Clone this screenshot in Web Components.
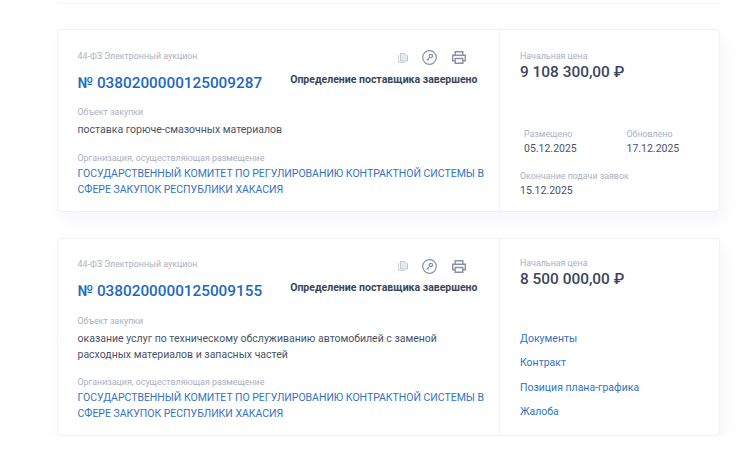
<!DOCTYPE html>
<html lang="ru">
<head>
<meta charset="utf-8">
<title>Закупки</title>
<style>
  html, body { margin: 0; background: #fff; }
  body { font-family: Roboto, "Noto Sans", sans-serif; color: #334059; }
</style>
</head>
<body>
<tender-list>
  <tender-card law="44-ФЗ Электронный аукцион" number="№ 0380200000125009287" status="Определение поставщика завершено"
    price="9 108 300,00 ₽" org="ГОСУДАРСТВЕННЫЙ КОМИТЕТ ПО РЕГУЛИРОВАНИЮ КОНТРАКТНОЙ СИСТЕМЫ В СФЕРЕ ЗАКУПОК РЕСПУБЛИКИ ХАКАСИЯ">
    <span slot="subject">поставка горюче-смазочных материалов</span>
    <tender-dates slot="side"></tender-dates>
  </tender-card>
  <tender-card law="44-ФЗ Электронный аукцион" number="№ 0380200000125009155" status="Определение поставщика завершено"
    price="8 500 000,00 ₽" org="ГОСУДАРСТВЕННЫЙ КОМИТЕТ ПО РЕГУЛИРОВАНИЮ КОНТРАКТНОЙ СИСТЕМЫ В СФЕРЕ ЗАКУПОК РЕСПУБЛИКИ ХАКАСИЯ" style="--side-top:18.5px;--side-gap:42px;--obj-gap:13px;--org-gap:13px">
    <span slot="subject">оказание услуг по техническому обслуживанию автомобилей с заменой расходных материалов и запасных частей</span>
    <tender-links slot="side"></tender-links>
  </tender-card>
</tender-list>

<template id="tender-card-tpl">
  <style>
    :host {
      display: grid;
      grid-template-columns: 442px 1fr;
      background: #fff;
      border: 1px solid #f0f1f6;
      border-radius: 4px;
      box-shadow: 4px 8px 16px rgba(60, 75, 110, .05);
      box-sizing: border-box;
    }
    .main { padding: 19.5px 12px 13px 19.5px; border-right: 1px solid #f0f1f6; min-width: 0; }
    .side { padding: var(--side-top, 19.5px) 20px 12px 20px; display: flex; flex-direction: column; }
    .label { font-size: 8.85px; line-height: 12px; color: #a9b1c1; }
    .top { display: flex; justify-content: space-between; }
    .icons { display: flex; align-items: center; gap: 15px; margin: -1px 21px -5px 0; color: #8792a9; }
    .icons svg { display: block; }
    .head { display: flex; justify-content: space-between; align-items: flex-start; margin-top: 10px; padding-right: 9.5px; }
    .number { font-size: 15.3px; line-height: 22px; font-weight: 500; color: #2069bd; }
    .status { font-size: 10.5px; line-height: 14px; font-weight: 700; color: #3a465d; margin-top: 1px; }
    .subject { font-size: 10.5px; line-height: 16px; color: #495368; margin-top: 4px; }
    .org { font-size: 10.5px; line-height: 16px; color: #3473bf; margin-top: 2px; letter-spacing: -.025px; }
    .gap-a { margin-top: var(--obj-gap, 12px); }
    .gap-b { margin-top: var(--org-gap, 14px); }
    .price { font-size: 15.4px; line-height: 20px; font-weight: 500; color: #3a465d; }
    .fill { margin-top: var(--side-gap, 46px); }
  </style>
  <div class="main">
    <div class="top">
      <div class="label law"></div>
      <div class="icons">
        <svg width="10" height="10" viewBox="0 0 10 10" fill="none"><path d="M.5 2v7.500h6.500" stroke="#c9ced9"/><path d="M2.500.5h4.500l2.500 2.500v5h-7z" fill="#e6e9ef" stroke="#c0c6d2"/></svg>
        <svg width="15" height="15" viewBox="0 0 15 15" fill="none" stroke="currentColor" style="margin-left:-1px"><circle cx="7.500" cy="7.500" r="6.800" stroke-width="1.200"/><circle cx="8.900" cy="6" r="1.700" stroke-width="1.200"/><path d="M7.600 7.300 4.600 10.400M5.600 9.400l.9.900" stroke-width="1.200"/></svg>
        <svg width="14" height="13" viewBox="0 0 14 13" fill="none" stroke="currentColor" stroke-width="1.400"><path d="M3.200 4V.7h7.600V4"/><path d="M3.200 9.800H.7V4.200h12.600v5.600h-2.500"/><path d="M3.200 7.500h7.600v4.800H3.200z"/></svg>
      </div>
    </div>
    <div class="head">
      <div class="number"></div>
      <div class="status"></div>
    </div>
    <div class="label gap-a">Объект закупки</div>
    <div class="subject"><slot name="subject"></slot></div>
    <div class="label gap-b">Организация, осуществляющая размещение</div>
    <div class="org"></div>
  </div>
  <div class="side">
    <div class="label">Начальная цена</div>
    <div class="price"></div>
    <div class="fill"><slot name="side"></slot></div>
  </div>
</template>

<template id="tender-dates-tpl">
  <style>
    :host { display: block; }
    .row { display: grid; grid-template-columns: 102.500px 1fr; padding-left: 4px; }
    .label { font-size: 8.850px; line-height: 12px; color: #a9b1c1; }
    .val { font-size: 10.500px; line-height: 15px; color: #495368; margin-top: 1px; }
    .end { margin-top: 14px; }
  </style>
  <div class="row">
    <div><div class="label">Размещено</div><div class="val">05.12.2025</div></div>
    <div><div class="label">Обновлено</div><div class="val">17.12.2025</div></div>
  </div>
  <div class="end"><div class="label">Окончание подачи заявок</div><div class="val">15.12.2025</div></div>
</template>

<template id="tender-links-tpl">
  <style>
    :host { display: flex; flex-direction: column; gap: 8.300px; }
    a { font-size: 10.500px; line-height: 16px; color: #3473bf; text-decoration: none; }
  </style>
  <a href="#">Документы</a>
  <a href="#">Контракт</a>
  <a href="#">Позиция плана-графика</a>
  <a href="#">Жалоба</a>
</template>

<script>
function fromTemplate(el, id) {
  const shadow = el.attachShadow({ mode: 'open' });
  shadow.appendChild(document.getElementById(id).content.cloneNode(true));
  return shadow;
}

class TenderList extends HTMLElement {
  constructor() {
    super();
    const shadow = this.attachShadow({ mode: 'open' });
    shadow.innerHTML = `
      <style>
        :host { display: block; padding: 3px 24px 0 57px; }
        .rule { height: 1px; background: #f3f4f7; margin-bottom: 25px; }
        .cards { display: flex; flex-direction: column; gap: 26px; }
      </style>
      <div class="rule"></div>
      <div class="cards"><slot></slot></div>
    `;
  }
}

class TenderCard extends HTMLElement {
  connectedCallback() {
    if (this.shadowRoot) return;
    const shadow = fromTemplate(this, 'tender-card-tpl');
    // simple attribute -> text mapping
    shadow.querySelector('.law').textContent = this.getAttribute('law');
    shadow.querySelector('.number').textContent = this.getAttribute('number');
    shadow.querySelector('.status').textContent = this.getAttribute('status');
    shadow.querySelector('.price').textContent = this.getAttribute('price');
    shadow.querySelector('.org').textContent = this.getAttribute('org');
  }
}

class TenderDates extends HTMLElement {
  constructor() {
    super();
    fromTemplate(this, 'tender-dates-tpl');
  }
}

class TenderLinks extends HTMLElement {
  constructor() {
    super();
    fromTemplate(this, 'tender-links-tpl');
  }
}

customElements.define('tender-list', TenderList);
customElements.define('tender-card', TenderCard);
customElements.define('tender-dates', TenderDates);
customElements.define('tender-links', TenderLinks);
</script>
</body>
</html>
